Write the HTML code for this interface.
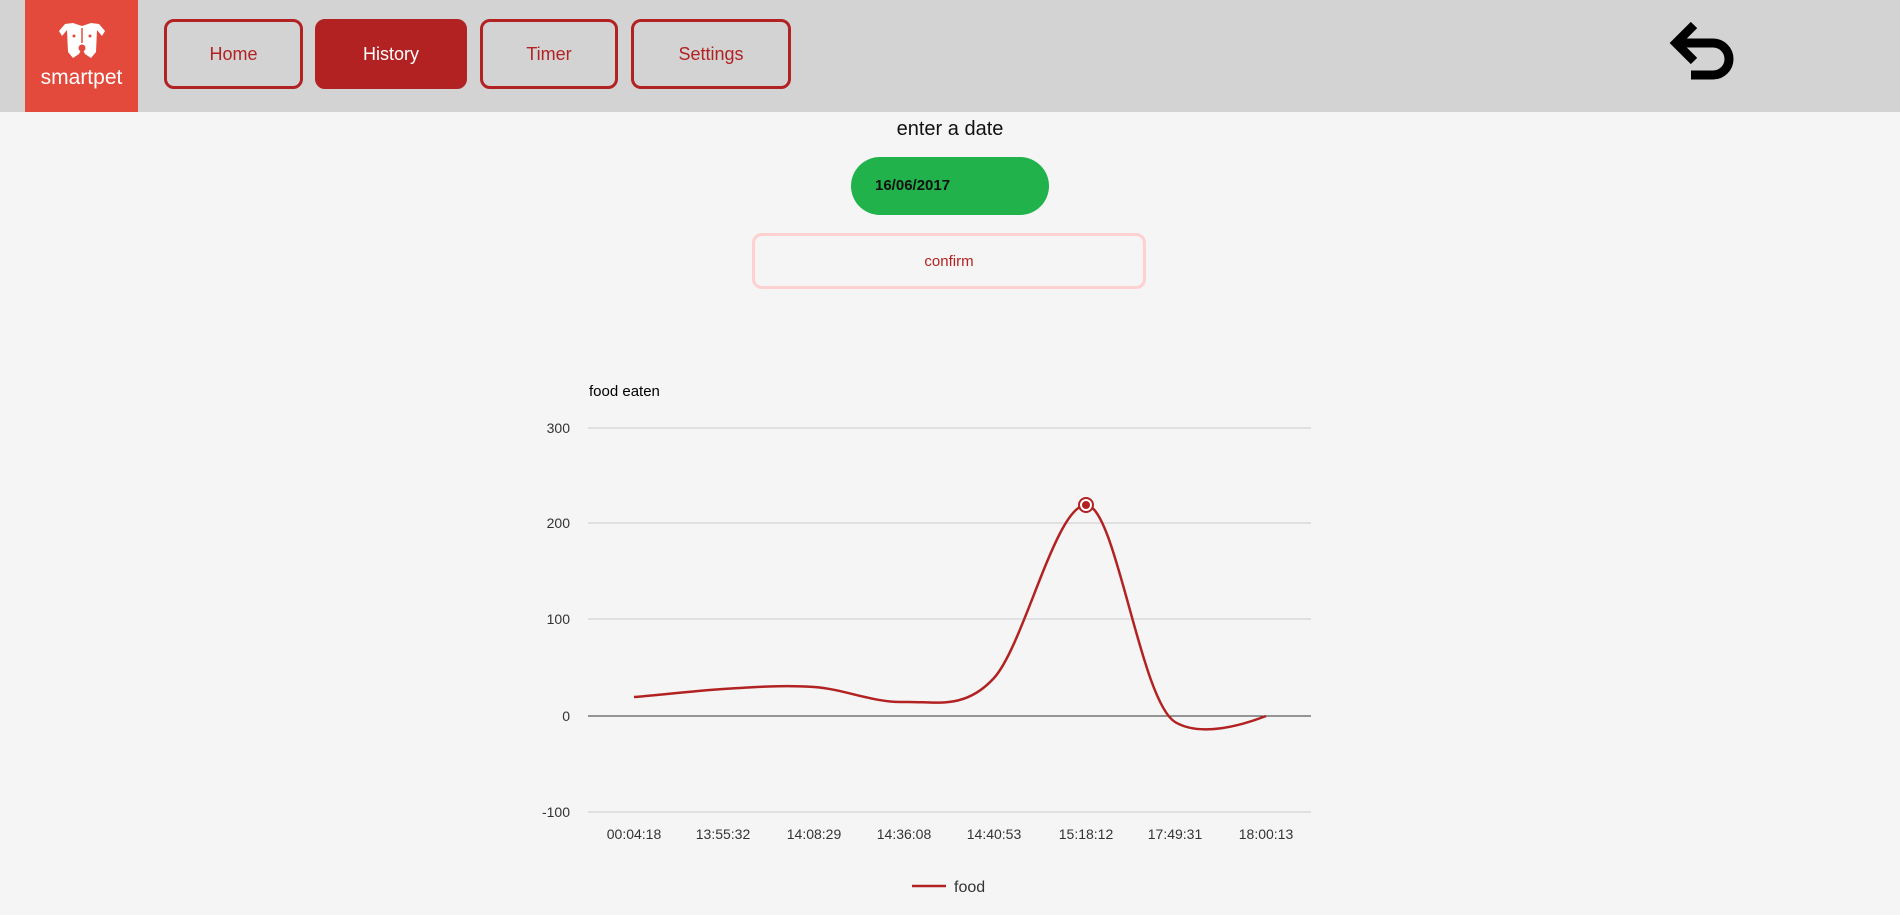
<!DOCTYPE html>
<html><head><meta charset="utf-8"><style>
body{margin:0;width:1900px;height:915px;background:#f5f5f5;font-family:"Liberation Sans",sans-serif;position:relative;overflow:hidden}
.hdr{position:absolute;left:0;top:0;width:1900px;height:112px;background:#d3d3d3}
.logo{position:absolute;left:25px;top:0;width:113px;height:112px;background:#e34a3b;color:#fff;text-align:center}
.logo .t{position:absolute;top:66px;left:0;width:113px;font-size:21px}
.btn{position:absolute;top:19px;height:70px;border:3px solid #b22222;border-radius:10px;box-sizing:border-box;color:#b22222;font-size:18px;text-align:center;line-height:64px}
.btn.a{background:#b22222;color:#fff}
.abs{position:absolute}
</style></head><body>
<div class="hdr">
<div class="logo">
<svg class="abs" style="left:34px;top:22px" width="46" height="40" viewBox="0 0 46 40"><path d="M6 2 L0 9 L3 14 L8 8 L9 30 L14 36 L20 32 L23 26 L26 32 L32 36 L37 30 L38 8 L43 14 L46 9 L40 2 L32 1 L23 4 L14 1 Z" fill="#fff"/><circle cx="23" cy="26" r="3.5" fill="#e34a3b"/><path d="M23 6 L23 21" stroke="#e34a3b" stroke-width="1.5"/><circle cx="15" cy="14" r="1.5" fill="#e34a3b"/><circle cx="31" cy="14" r="1.5" fill="#e34a3b"/></svg>
<div class="t">smartpet</div></div>
<div class="btn" style="left:164px;width:139px">Home</div>
<div class="btn a" style="left:315px;width:152px">History</div>
<div class="btn" style="left:480px;width:138px">Timer</div>
<div class="btn" style="left:631px;width:160px">Settings</div>
<svg class="abs" style="left:1665px;top:18px" width="72" height="66" viewBox="0 0 72 66"><path d="M29 7 L11 25 L29 43" fill="none" stroke="#000" stroke-width="9"/><path d="M13 25 L48 25 A16 16 0 0 1 48 57 L26 57" fill="none" stroke="#000" stroke-width="9"/></svg>
</div>
<div class="abs" style="left:0;width:1900px;top:118px;text-align:center;font-size:20px;color:#111">enter a date</div>
<div class="abs" style="left:851px;top:157px;width:198px;height:58px;border-radius:29px;background:#21b24b"><span class="abs" style="left:24px;top:20px;font-size:15px;font-weight:bold;color:#111">16/06/2017</span></div>
<div class="abs" style="left:752px;top:233px;width:394px;height:56px;border:3px solid #ffd0d0;border-radius:10px;box-sizing:border-box;text-align:center;line-height:52px;color:#b22222;font-size:15px">confirm</div>
<svg class="abs" style="left:0;top:0" width="1900" height="915">
<g font-family="Liberation Sans" font-size="14" fill="#333">
<text x="589" y="396" font-size="15" fill="#000">food eaten</text>
<g stroke="#ccc" stroke-width="1"><line x1="588" y1="428" x2="1311" y2="428"/><line x1="588" y1="523" x2="1311" y2="523"/><line x1="588" y1="619" x2="1311" y2="619"/><line x1="588" y1="812" x2="1311" y2="812"/></g>
<line x1="588" y1="716" x2="1311" y2="716" stroke="#333"/>
<g text-anchor="end"><text x="570" y="433">300</text><text x="570" y="528">200</text><text x="570" y="624">100</text><text x="570" y="721">0</text><text x="570" y="817">-100</text></g>
<g text-anchor="middle"><text x="634" y="839">00:04:18</text><text x="723" y="839">13:55:32</text><text x="814" y="839">14:08:29</text><text x="904" y="839">14:36:08</text><text x="994" y="839">14:40:53</text><text x="1086" y="839">15:18:12</text><text x="1175" y="839">17:49:31</text><text x="1266" y="839">18:00:13</text></g>
<path d="M634 697 C649 696 693 691 723 689 C753 687 784 685 814 687 C844 689 874 703 904 702 C934 701 964 711 994 678 C1024 645 1056 505 1086 505 C1116 505 1140 700 1175 722 C1200 737 1240 726 1266 716" fill="none" stroke="#b22222" stroke-width="2.5"/>
<circle cx="1086" cy="505" r="7" fill="#fff" stroke="#b22222" stroke-width="2"/><circle cx="1086" cy="505" r="4" fill="#b22222"/>
<line x1="912" y1="886" x2="946" y2="886" stroke="#b22222" stroke-width="2.5"/>
<text x="954" y="892" font-size="16">food</text>
</g></svg>
</body></html>
